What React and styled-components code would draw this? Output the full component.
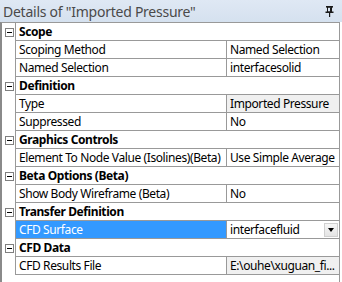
import React from "react";
import styled, { createGlobalStyle } from "styled-components";

const Global = createGlobalStyle`
  html, body {
    margin: 0;
    padding: 0;
    background: #ffffff;
  }
  body {
    width: 342px;
    height: 282px;
    overflow: hidden;
    font-family: "Noto Sans", "DejaVu Sans", sans-serif;
  }
`;

const rows = [
  { group: "Scope" },
  { name: "Scoping Method", value: "Named Selection" },
  { name: "Named Selection", value: "interfacesolid" },
  { group: "Definition" },
  { name: "Type", value: "Imported Pressure", readOnly: true },
  { name: "Suppressed", value: "No" },
  { group: "Graphics Controls" },
  { name: "Element To Node Value (Isolines)(Beta)", value: "Use Simple Average" },
  { group: "Beta Options (Beta)" },
  { name: "Show Body Wireframe (Beta)", value: "No" },
  { group: "Transfer Definition" },
  { name: "CFD Surface", value: "interfacefluid", selected: true, combo: true },
  { group: "CFD Data" },
  { name: "CFD Results File", value: "E:\\ouhe\\xuguan_fi...", readOnly: true },
];

class App extends React.Component {
  render() {
    return (
      <Panel>
        <Global />
        <TitleBar>
          <Title>Details of "Imported Pressure"</Title>
          <Pin width="9" height="11" viewBox="0 0 9 11">
            <rect x="1" y="0" width="7" height="1.6" fill="#1a1a1a" />
            <rect x="2.5" y="1" width="4" height="5" fill="none" stroke="#1a1a1a" strokeWidth="1" />
            <rect x="5" y="1.5" width="1.4" height="4.5" fill="#1a1a1a" />
            <rect x="0.5" y="5.5" width="8" height="1.5" fill="#1a1a1a" />
            <rect x="4" y="7" width="1.2" height="4" fill="#1a1a1a" />
          </Pin>
        </TitleBar>
        <Grid>
          {rows.map((row, i) =>
            row.group ? (
              <Row key={i}>
                <Expander>
                  <MinusBox />
                </Expander>
                <GroupCell>{row.group}</GroupCell>
              </Row>
            ) : (
              <Row key={i}>
                <Expander />
                <NameCell selected={row.selected}>{row.name}</NameCell>
                <ValueCell readOnly={row.readOnly}>
                  {row.combo ? (
                    <Combo>
                      <span>{row.value}</span>
                      <ComboButton>
                        <Arrow />
                      </ComboButton>
                    </Combo>
                  ) : (
                    row.value
                  )}
                </ValueCell>
              </Row>
            )
          )}
        </Grid>
      </Panel>
    );
  }
}

const Panel = styled.div`
  width: 342px;
  height: 282px;
  display: flex;
  flex-direction: column;
  background: #ffffff;
`;

const TitleBar = styled.div`
  height: 22px;
  flex: none;
  display: flex;
  align-items: center;
  justify-content: space-between;
  padding: 0 8px 0 3px;
  background: linear-gradient(to bottom, #dfe8f4, #d5e1ef);
`;

const Title = styled.span`
  font-size: 14px;
  letter-spacing: -0.25px;
  color: #4a4a4a;
  white-space: nowrap;
`;

const Pin = styled.svg`
  display: block;
  margin-top: 1px;
`;

const Grid = styled.div`
  flex: 1;
  width: 337px;
  border-top: 1px solid #999999;
  border-left: 2px solid #8a8a8a;
  border-right: 1px solid #999999;
  display: flex;
  flex-direction: column;
`;

const Row = styled.div`
  height: 18px;
  display: grid;
  grid-template-columns: 13px 211px 1fr;
  font-size: 12px;
  letter-spacing: -0.4px;
  line-height: 17px;
  color: #000000;
`;

const Expander = styled.div`
  display: flex;
  align-items: center;
  justify-content: center;
  padding-left: 1px;
`;

const MinusBox = styled.div`
  width: 7px;
  height: 7px;
  border: 1px solid #7f7f7f;
  background: #ffffff;
  position: relative;
  &::after {
    content: "";
    position: absolute;
    left: 1px;
    right: 1px;
    top: 3px;
    height: 1px;
    background: #000000;
  }
`;

const GroupCell = styled.div`
  grid-column: 2 / 4;
  border-left: 1px solid #999999;
  border-bottom: 1px solid #999999;
  padding-left: 3px;
  font-weight: bold;
  white-space: nowrap;
`;

const NameCell = styled.div`
  border-left: 1px solid #999999;
  border-bottom: 1px solid #999999;
  padding-left: 3px;
  white-space: nowrap;
  overflow: hidden;
  background: ${(p) => (p.selected ? "#3399ff" : "#ffffff")};
  color: ${(p) => (p.selected ? "#ffffff" : "#000000")};
`;

const ValueCell = styled.div`
  border-left: 1px solid #999999;
  border-bottom: 1px solid #999999;
  padding-left: 3px;
  white-space: nowrap;
  overflow: hidden;
  background: ${(p) => (p.readOnly ? "#f0f0f0" : "#ffffff")};
`;

const Combo = styled.div`
  display: flex;
  align-items: center;
  justify-content: space-between;
  height: 17px;
  padding-right: 1px;
`;

const ComboButton = styled.div`
  width: 14px;
  height: 14px;
  box-sizing: border-box;
  border: 1px solid #d0d0d0;
  background: linear-gradient(to bottom, #f6f6f6, #e4e4e4);
  display: flex;
  align-items: center;
  justify-content: center;
`;

const Arrow = styled.div`
  width: 0;
  height: 0;
  border-left: 3px solid transparent;
  border-right: 3px solid transparent;
  border-top: 4px solid #000000;
`;

export default App;
